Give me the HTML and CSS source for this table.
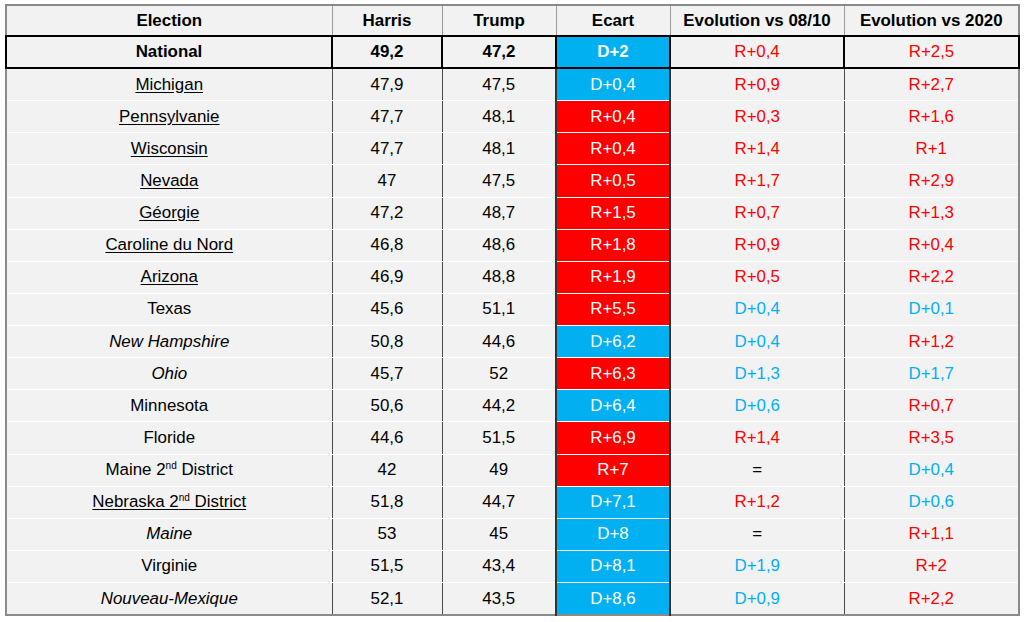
FILE: index.html
```html
<!DOCTYPE html>
<html lang="fr">
<head>
<meta charset="utf-8">
<title>Election</title>
<link rel="stylesheet" href="styles.css">
</head>
<body>
<table class="poll">
  <colgroup>
    <col class="c-name"><col class="c-num"><col class="c-num2"><col class="c-gap"><col class="c-evo"><col class="c-evo2">
  </colgroup>
  <thead>
    <tr class="head"><th>Election</th><th>Harris</th><th>Trump</th><th>Ecart</th><th>Evolution vs 08/10</th><th>Evolution vs 2020</th></tr>
  </thead>
  <tbody>
    <tr class="national"><td class="bold">National</td><td class="bold">49,2</td><td class="bold">47,2</td><td class="gap d bold">D+2</td><td class="r">R+0,4</td><td class="r">R+2,5</td></tr>
    <tr><td><span class="u">Michigan</span></td><td>47,9</td><td>47,5</td><td class="gap d">D+0,4</td><td class="r">R+0,9</td><td class="r">R+2,7</td></tr>
    <tr><td><span class="u">Pennsylvanie</span></td><td>47,7</td><td>48,1</td><td class="gap rr">R+0,4</td><td class="r">R+0,3</td><td class="r">R+1,6</td></tr>
    <tr><td><span class="u">Wisconsin</span></td><td>47,7</td><td>48,1</td><td class="gap rr">R+0,4</td><td class="r">R+1,4</td><td class="r">R+1</td></tr>
    <tr><td><span class="u">Nevada</span></td><td>47</td><td>47,5</td><td class="gap rr">R+0,5</td><td class="r">R+1,7</td><td class="r">R+2,9</td></tr>
    <tr><td><span class="u">Géorgie</span></td><td>47,2</td><td>48,7</td><td class="gap rr">R+1,5</td><td class="r">R+0,7</td><td class="r">R+1,3</td></tr>
    <tr><td><span class="u">Caroline du Nord</span></td><td>46,8</td><td>48,6</td><td class="gap rr">R+1,8</td><td class="r">R+0,9</td><td class="r">R+0,4</td></tr>
    <tr><td><span class="u">Arizona</span></td><td>46,9</td><td>48,8</td><td class="gap rr">R+1,9</td><td class="r">R+0,5</td><td class="r">R+2,2</td></tr>
    <tr><td>Texas</td><td>45,6</td><td>51,1</td><td class="gap rr">R+5,5</td><td class="b">D+0,4</td><td class="b">D+0,1</td></tr>
    <tr><td><i>New Hampshire</i></td><td>50,8</td><td>44,6</td><td class="gap d">D+6,2</td><td class="b">D+0,4</td><td class="r">R+1,2</td></tr>
    <tr><td><i>Ohio</i></td><td>45,7</td><td>52</td><td class="gap rr">R+6,3</td><td class="b">D+1,3</td><td class="b">D+1,7</td></tr>
    <tr><td>Minnesota</td><td>50,6</td><td>44,2</td><td class="gap d">D+6,4</td><td class="b">D+0,6</td><td class="r">R+0,7</td></tr>
    <tr><td>Floride</td><td>44,6</td><td>51,5</td><td class="gap rr">R+6,9</td><td class="r">R+1,4</td><td class="r">R+3,5</td></tr>
    <tr><td>Maine 2<sup>nd</sup> District</td><td>42</td><td>49</td><td class="gap rr">R+7</td><td>=</td><td class="b">D+0,4</td></tr>
    <tr><td><span class="u">Nebraska 2<sup>nd</sup> District</span></td><td>51,8</td><td>44,7</td><td class="gap d">D+7,1</td><td class="r">R+1,2</td><td class="b">D+0,6</td></tr>
    <tr><td><i>Maine</i></td><td>53</td><td>45</td><td class="gap d">D+8</td><td>=</td><td class="r">R+1,1</td></tr>
    <tr><td>Virginie</td><td>51,5</td><td>43,4</td><td class="gap d">D+8,1</td><td class="b">D+1,9</td><td class="r">R+2</td></tr>
    <tr><td><i>Nouveau-Mexique</i></td><td>52,1</td><td>43,5</td><td class="gap d">D+8,6</td><td class="b">D+0,9</td><td class="r">R+2,2</td></tr>
  </tbody>
</table>
</body>
</html>
```

FILE: styles.css
```css
html, body {
  margin: 0;
  padding: 0;
  background: #ffffff;
}

body {
  padding: 4px 0 0 5px;
  font-family: "Liberation Sans", Arial, sans-serif;
  font-size: 16.9px;
  color: #000;
}

.poll {
  border-collapse: collapse;
  table-layout: fixed;
  width: 1013px;
  border: 2px solid #8a8a8a;
  background: #f2f2f2;
}

.c-name { width: 326px; }
.c-num { width: 110px; }
.c-num2 { width: 114px; }
.c-gap { width: 114px; }
.c-evo { width: 174px; }
.c-evo2 { width: 175px; }

.poll th,
.poll td {
  padding: 0;
  text-align: center;
  vertical-align: middle;
  line-height: 20px;
  white-space: nowrap;
}

.poll th {
  height: 29px;
  font-weight: bold;
  border: 1px solid #9a9a9a;
}

.poll td {
  height: 31.13px;
  border-top: 1px solid #ffffff;
  border-bottom: 1px solid #ffffff;
  border-left: 1px solid #4a4a4a;
  border-right: 1px solid #4a4a4a;
}

.poll tr.national td {
  border: 2px solid #000;
  height: 30px;
}

.poll td.bold { font-weight: bold; }

.poll td.gap {
  color: #fff;
  border-left: 2px solid #333;
  border-right: 2px solid #333;
}

.poll tr.national td.gap {
  border: 2px solid #000;
}

.poll td.d { background: #00b0f0; }
.poll td.rr { background: #ff0000; }

.r { color: #ff0000; }
.b { color: #00b0f0; }

.u { text-decoration: underline; text-underline-offset: 2px; }

sup {
  font-size: 10px;
  line-height: 0;
  vertical-align: 6px;
}
```
